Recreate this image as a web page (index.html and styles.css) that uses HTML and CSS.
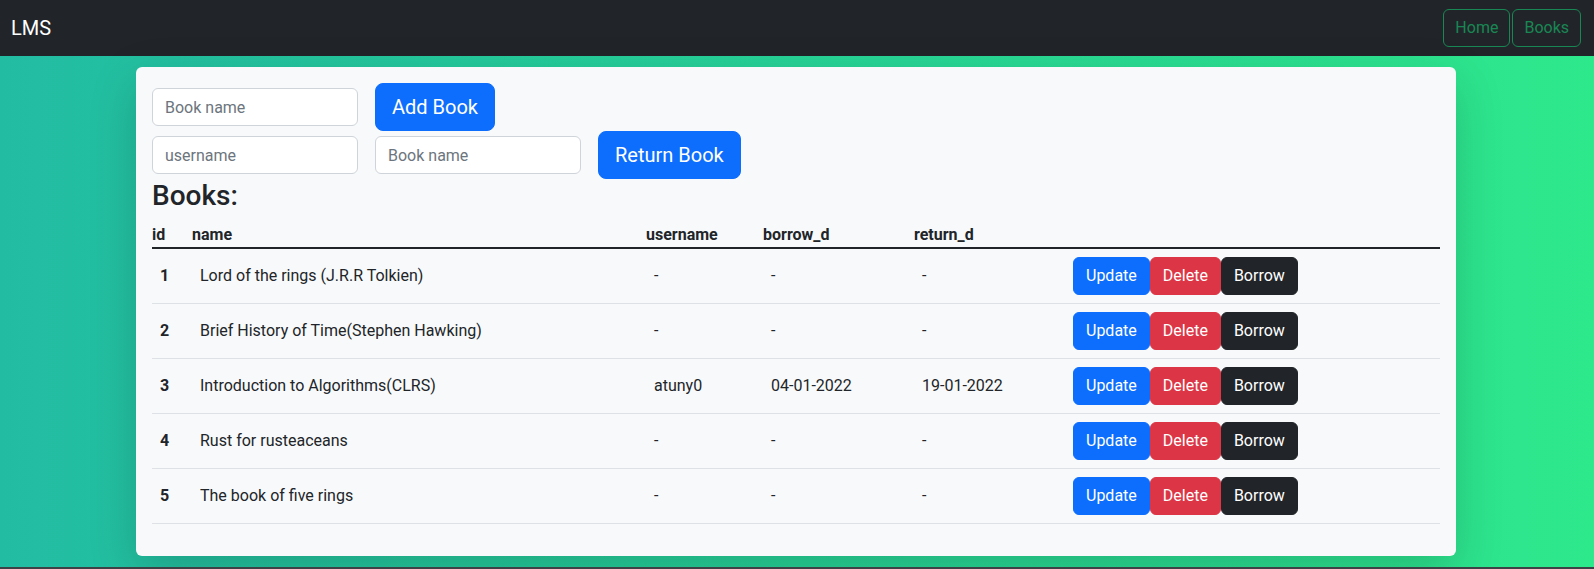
FILE: index.html
```html
<!DOCTYPE html>
<html lang="en">
<head>
<meta charset="utf-8">
<title>LMS</title>
<link rel="stylesheet" href="styles.css">
</head>
<body>
<nav class="navbar">
  <span class="brand">LMS</span>
  <div class="nav-actions">
    <button class="btn btn-outline-success">Home</button>
    <button class="btn btn-outline-success">Books</button>
  </div>
</nav>
<main class="stage">
  <section class="card">
    <div class="form-row">
      <input class="field" type="text" placeholder="Book name">
      <button class="btn btn-lg btn-primary">Add Book</button>
    </div>
    <div class="form-row">
      <input class="field" type="text" placeholder="username">
      <input class="field" type="text" placeholder="Book name">
      <button class="btn btn-lg btn-primary">Return Book</button>
    </div>
    <h3 class="title">Books:</h3>
    <table class="books">
      <colgroup>
        <col class="c-id"><col class="c-name"><col class="c-user"><col class="c-borrow"><col class="c-return"><col>
      </colgroup>
      <thead>
        <tr><th>id</th><th>name</th><th>username</th><th>borrow_d</th><th>return_d</th><th></th></tr>
      </thead>
      <tbody>
        <tr><th>1</th><td>Lord of the rings (J.R.R Tolkien)</td><td>-</td><td>-</td><td>-</td>
          <td><div class="actions"><button class="btn btn-primary">Update</button><button class="btn btn-danger">Delete</button><button class="btn btn-dark">Borrow</button></div></td></tr>
        <tr><th>2</th><td>Brief History of Time(Stephen Hawking)</td><td>-</td><td>-</td><td>-</td>
          <td><div class="actions"><button class="btn btn-primary">Update</button><button class="btn btn-danger">Delete</button><button class="btn btn-dark">Borrow</button></div></td></tr>
        <tr><th>3</th><td>Introduction to Algorithms(CLRS)</td><td>atuny0</td><td>04-01-2022</td><td>19-01-2022</td>
          <td><div class="actions"><button class="btn btn-primary">Update</button><button class="btn btn-danger">Delete</button><button class="btn btn-dark">Borrow</button></div></td></tr>
        <tr><th>4</th><td>Rust for rusteaceans</td><td>-</td><td>-</td><td>-</td>
          <td><div class="actions"><button class="btn btn-primary">Update</button><button class="btn btn-danger">Delete</button><button class="btn btn-dark">Borrow</button></div></td></tr>
        <tr><th>5</th><td>The book of five rings</td><td>-</td><td>-</td><td>-</td>
          <td><div class="actions"><button class="btn btn-primary">Update</button><button class="btn btn-danger">Delete</button><button class="btn btn-dark">Borrow</button></div></td></tr>
      </tbody>
    </table>
  </section>
</main>
</body>
</html>
```
FILE: styles.css
```css
* { box-sizing: border-box; }
html { background: #3d4246; }
body {
  margin: 0;
  font-family: Roboto, "Noto Sans", "Liberation Sans", sans-serif;
  font-size: 16px;
  line-height: 1.5;
  color: #212529;
}
.navbar {
  height: 56px;
  background: #212529;
  display: flex;
  align-items: center;
  justify-content: space-between;
  padding: 0 13px 0 11px;
}
.brand {
  color: #fff;
  font-size: 20px;
  line-height: 30px;
}
.nav-actions { display: flex; gap: 2px; }
.btn {
  font-family: inherit;
  font-size: 16px;
  line-height: 24px;
  padding: 6px 12px;
  border: 1px solid transparent;
  border-radius: 6px;
  color: #fff;
  cursor: pointer;
}
.btn-lg {
  font-size: 20px;
  line-height: 30px;
  padding: 8px 16px;
  border-radius: 8px;
}
.btn-outline-success {
  background: transparent;
  color: #198754;
  border-color: #198754;
  padding: 6px 11px;
}
.btn-primary { background: #0d6efd; border-color: #0d6efd; }
.btn-danger { background: #dc3545; border-color: #dc3545; }
.btn-dark { background: #212529; border-color: #212529; }
.stage {
  height: 511px;
  padding: 11px 2px 0 0;
  background: linear-gradient(90deg, #22bca3 0%, #27d397 50%, #2ee88c 100%);
}
.card {
  width: 1320px;
  margin: 0 auto;
  padding: 16px;
  background: #f8f9fa;
  border-radius: 6px;
  box-shadow: 0 16px 48px rgba(0, 0, 0, 0.175);
}
.form-row {
  display: flex;
  align-items: center;
  gap: 17px;
}
.field {
  width: 206px;
  height: 38px;
  padding: 6px 12px;
  font-family: inherit;
  font-size: 16px;
  color: #212529;
  background: #fff;
  border: 1px solid #ced4da;
  border-radius: 6px;
}
.field::placeholder { color: #6c757d; }
.title {
  margin: 0 0 9px;
  font-size: 28px;
  font-weight: 500;
  line-height: 1.2;
}
.books {
  width: 100%;
  border-collapse: collapse;
  table-layout: fixed;
  margin-bottom: 16px;
}
.c-id { width: 40px; }
.c-name { width: 454px; }
.c-user { width: 117px; }
.c-borrow { width: 151px; }
.c-return { width: 151px; }
.books thead th {
  padding: 0;
  text-align: left;
  font-weight: 700;
  line-height: 25px;
  border-bottom: 2px solid #212529;
}
.books tbody th,
.books tbody td {
  padding: 8px;
  text-align: left;
  vertical-align: middle;
  border-bottom: 1px solid #dee2e6;
}
.books tbody th { font-weight: 700; }
.actions { display: flex; }
```
